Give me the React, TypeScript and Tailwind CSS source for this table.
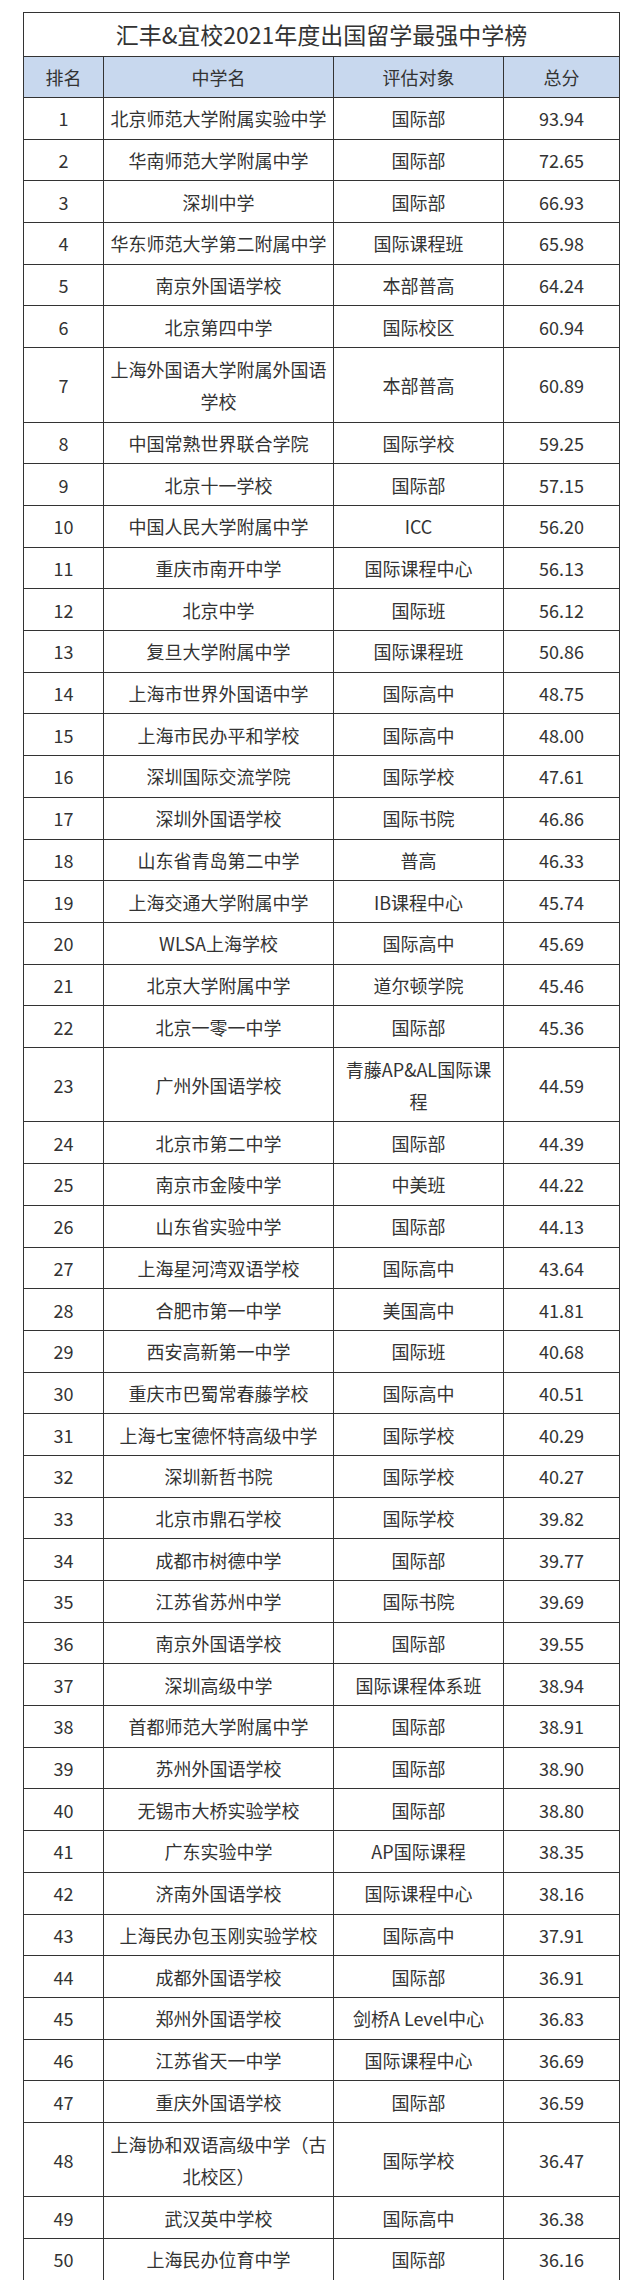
import React from "react";

type Row = [string, string, string, string];

const rows: Row[] = [
  ["1", "北京师范大学附属实验中学", "国际部", "93.94"],
  ["2", "华南师范大学附属中学", "国际部", "72.65"],
  ["3", "深圳中学", "国际部", "66.93"],
  ["4", "华东师范大学第二附属中学", "国际课程班", "65.98"],
  ["5", "南京外国语学校", "本部普高", "64.24"],
  ["6", "北京第四中学", "国际校区", "60.94"],
  ["7", "上海外国语大学附属外国语学校", "本部普高", "60.89"],
  ["8", "中国常熟世界联合学院", "国际学校", "59.25"],
  ["9", "北京十一学校", "国际部", "57.15"],
  ["10", "中国人民大学附属中学", "ICC", "56.20"],
  ["11", "重庆市南开中学", "国际课程中心", "56.13"],
  ["12", "北京中学", "国际班", "56.12"],
  ["13", "复旦大学附属中学", "国际课程班", "50.86"],
  ["14", "上海市世界外国语中学", "国际高中", "48.75"],
  ["15", "上海市民办平和学校", "国际高中", "48.00"],
  ["16", "深圳国际交流学院", "国际学校", "47.61"],
  ["17", "深圳外国语学校", "国际书院", "46.86"],
  ["18", "山东省青岛第二中学", "普高", "46.33"],
  ["19", "上海交通大学附属中学", "IB课程中心", "45.74"],
  ["20", "WLSA上海学校", "国际高中", "45.69"],
  ["21", "北京大学附属中学", "道尔顿学院", "45.46"],
  ["22", "北京一零一中学", "国际部", "45.36"],
  ["23", "广州外国语学校", "青藤AP&AL国际课程", "44.59"],
  ["24", "北京市第二中学", "国际部", "44.39"],
  ["25", "南京市金陵中学", "中美班", "44.22"],
  ["26", "山东省实验中学", "国际部", "44.13"],
  ["27", "上海星河湾双语学校", "国际高中", "43.64"],
  ["28", "合肥市第一中学", "美国高中", "41.81"],
  ["29", "西安高新第一中学", "国际班", "40.68"],
  ["30", "重庆市巴蜀常春藤学校", "国际高中", "40.51"],
  ["31", "上海七宝德怀特高级中学", "国际学校", "40.29"],
  ["32", "深圳新哲书院", "国际学校", "40.27"],
  ["33", "北京市鼎石学校", "国际学校", "39.82"],
  ["34", "成都市树德中学", "国际部", "39.77"],
  ["35", "江苏省苏州中学", "国际书院", "39.69"],
  ["36", "南京外国语学校", "国际部", "39.55"],
  ["37", "深圳高级中学", "国际课程体系班", "38.94"],
  ["38", "首都师范大学附属中学", "国际部", "38.91"],
  ["39", "苏州外国语学校", "国际部", "38.90"],
  ["40", "无锡市大桥实验学校", "国际部", "38.80"],
  ["41", "广东实验中学", "AP国际课程", "38.35"],
  ["42", "济南外国语学校", "国际课程中心", "38.16"],
  ["43", "上海民办包玉刚实验学校", "国际高中", "37.91"],
  ["44", "成都外国语学校", "国际部", "36.91"],
  ["45", "郑州外国语学校", "剑桥A Level中心", "36.83"],
  ["46", "江苏省天一中学", "国际课程中心", "36.69"],
  ["47", "重庆外国语学校", "国际部", "36.59"],
  ["48", "上海协和双语高级中学（古北校区）", "国际学校", "36.47"],
  ["49", "武汉英中学校", "国际高中", "36.38"],
  ["50", "上海民办位育中学", "国际部", "36.16"],
];

const tall = new Set(["7", "23", "48"]);

function Cell({ children, last }: { children: React.ReactNode; last?: boolean }) {
  return (
    <div
      className={
        "flex items-center justify-center text-center px-[6px] leading-[32px] " +
        (last ? "" : "border-r border-[#333]")
      }
    >
      {children}
    </div>
  );
}

export default function App() {
  return (
    <div
      className="min-h-screen bg-white pt-[12px] pl-[23px] text-[#333]"
      style={{ fontFamily: '"Noto Sans CJK SC", "Noto Sans", sans-serif' }}
    >
      <div className="w-[597px] border border-[#333]">
        {/* Title */}
        <div className="h-[44px] flex items-center justify-center text-[23px] border-b border-[#333]">
          汇丰&amp;宜校2021年度出国留学最强中学榜
        </div>

        {/* Header */}
        <div className="grid grid-cols-[80px_230px_170px_115px] h-[41px] bg-[#c8d8ee] border-b border-[#333] text-[18px]">
          <Cell>排名</Cell>
          <Cell>中学名</Cell>
          <Cell>评估对象</Cell>
          <Cell last>总分</Cell>
        </div>

        {/* Rows */}
        {rows.map(([rank, name, target, score]) => (
          <div
            key={rank}
            className={
              "grid grid-cols-[80px_230px_170px_115px] border-b border-[#333] text-[18px] " +
              (tall.has(rank) ? "h-[74.5px]" : "h-[41.7px]")
            }
          >
            <Cell>{rank}</Cell>
            <Cell>{name}</Cell>
            <Cell>{target}</Cell>
            <Cell last>{score}</Cell>
          </div>
        ))}
      </div>
    </div>
  );
}
